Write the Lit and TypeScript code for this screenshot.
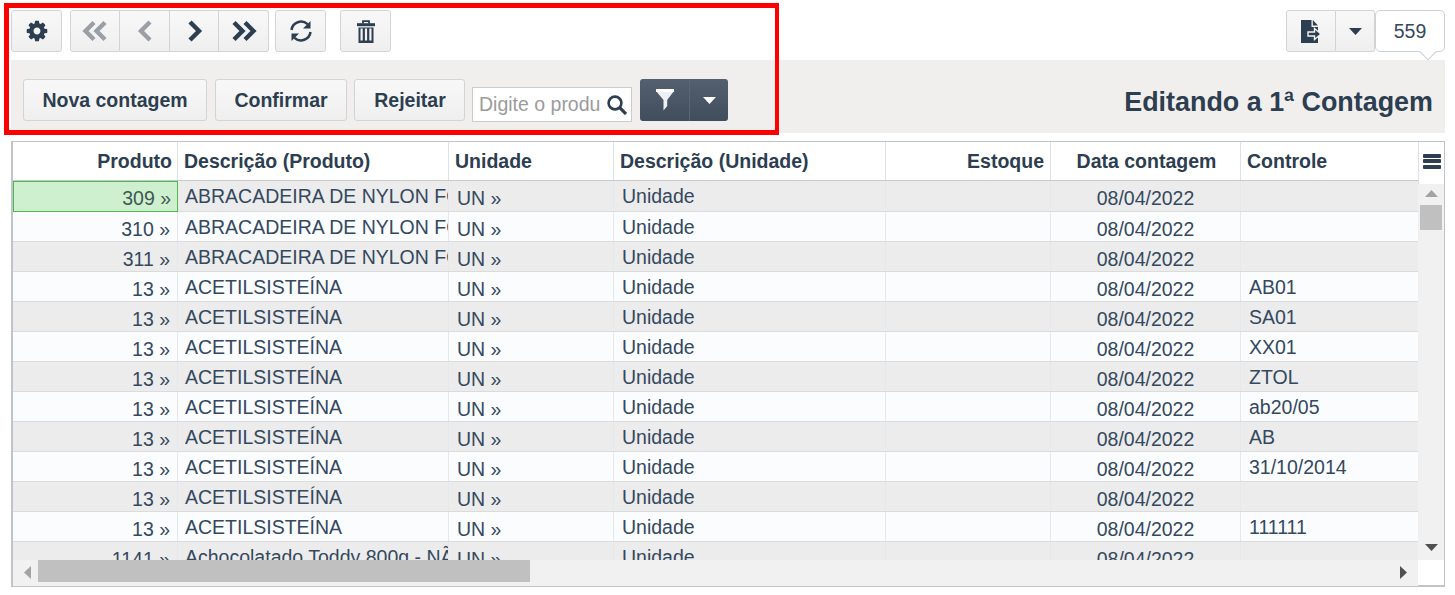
import { LitElement, html, css, svg } from "lit";
import { customElement } from "lit/decorators.js";

const COG = "M1152 896q0-106-75-181t-181-75-181 75-75 181 75 181 181 75 181-75 75-181zm512-109v222q0 12-8 23t-20 13l-185 28q-19 54-39 91 35 50 107 138 10 12 10 25t-9 23q-27 37-99 108t-94 71q-12 0-26-9l-138-108q-44 23-91 38-16 136-29 186-7 28-36 28h-222q-14 0-24.5-8.5t-11.5-21.5l-28-184q-49-16-90-37l-141 107q-10 9-25 9-14 0-25-11-126-114-165-168-7-10-7-23 0-12 8-23 15-21 51-66.5t54-70.5q-27-50-41-99l-183-27q-13-2-21-12.5t-8-23.5v-222q0-12 8-23t19-13l186-28q14-46 39-92-40-57-107-138-10-12-10-24 0-10 9-23 26-36 98.5-107.5t94.5-71.5q13 0 26 10l138 107q44-23 91-38 16-136 29-186 7-28 36-28h222q14 0 24.5 8.5t11.5 21.5l28 184q49 16 90 37l142-107q9-9 24-9 13 0 25 10 129 119 165 170 7 8 7 22 0 12-8 23-15 21-51 66.5t-54 70.5q26 50 41 98l183 28q13 2 21 12.5t8 23.5z";

const fa = (d: string, size: number) => html`<svg class="ic" width=${size} height=${size} viewBox="0 0 1792 1792" fill="currentColor"><path d=${d}></path></svg>`;
const chevrons = (pts: string[]) => html`<svg class="ic" width="26" height="22" viewBox="0 0 26 22" fill="none" stroke="currentColor" stroke-width="4.4">
  ${pts.map((p) => svg`<polyline points=${p}></polyline>`)}</svg>`;
const caret = (fill = "currentColor") => html`<svg class="ic" width="13" height="7" viewBox="0 0 13 7"><polygon points="0,0 13,0 6.5,7" fill=${fill}></polygon></svg>`;

type Row = [string, string, string];
const ABR = "ABRACADEIRA DE NYLON FORTE";
const ACE = "ACETILSISTEÍNA";
const rows: Row[] = [
  ["309 »", ABR, ""], ["310 »", ABR, ""], ["311 »", ABR, ""],
  ["13 »", ACE, "AB01"], ["13 »", ACE, "SA01"], ["13 »", ACE, "XX01"],
  ["13 »", ACE, "ZTOL"], ["13 »", ACE, "ab20/05"], ["13 »", ACE, "AB"],
  ["13 »", ACE, "31/10/2014"], ["13 »", ACE, ""], ["13 »", ACE, "111111"],
  ["1141 »", "Achocolatado Toddy 800g - NÃO USAR", ""],
];

@customElement("app-root")
export class AppRoot extends LitElement {
  static styles = css`
    :host { display: block; position: relative; width: 1455px; height: 595px; overflow: hidden; background: #fff;
      font-family: "Liberation Sans", Arial, sans-serif; color: #2c3e50; }
    .page { padding: 10px 10px 0 11px; display: flex; flex-direction: column; }
    .ic { display: block; flex: none; }
    .top { display: flex; height: 42px; }
    .btn { height: 42px; box-sizing: border-box; border: 1px solid #d4d4d4; border-radius: 3px;
      background: linear-gradient(#f8f8f8, #efefef); display: flex; align-items: center; justify-content: center;
      color: #2c3e50; font: bold 19.5px "Liberation Sans", Arial, sans-serif; flex: none; }
    .w51 { width: 51px; }
    .group { display: flex; flex: none; }
    .group .btn { border-radius: 0; border-left-width: 0; }
    .group .btn:first-child { border-radius: 3px 0 0 3px; border-left-width: 1px; }
    .group .btn:last-child { border-radius: 0 3px 3px 0; }
    .off { color: #9a9fa6; }
    .ml8 { margin-left: 8px; } .ml6 { margin-left: 6px; } .ml14 { margin-left: 14px; }
    .spacer { flex: 1; }
    .count { width: 70px; height: 42px; box-sizing: border-box; position: relative; flex: none; background: #fff;
      border: 1px solid #cfd1d3; border-radius: 5px; display: flex; align-items: center; justify-content: center;
      font-size: 19.5px; color: #34495e; }
    .count::after { content: ""; position: absolute; left: 46px; bottom: -7px; width: 11px; height: 11px; background: #fff;
      border-right: 1px solid #cfd1d3; border-bottom: 1px solid #cfd1d3; transform: rotate(45deg); }
    .panel { margin-top: 8px; height: 73px; background: #f0efee; display: flex; box-sizing: border-box; padding: 19px 12px 0 12px; }
    .panel .btn { margin-right: 8px; }
    .nova { width: 184px; } .conf { width: 132px; } .rej { width: 111px; padding-left: 1px; }
    .panel .conf { margin-right: 7px; } .panel .rej { margin-right: 7px; }
    .search { width: 160px; height: 35px; margin-top: 8px; box-sizing: border-box; border: 1px solid #ccc; background: #fff;
      display: flex; align-items: center; padding-left: 6px; margin-right: 8px; flex: none; }
    .search .ph { width: 121px; overflow: hidden; white-space: nowrap; font-size: 19.5px; color: #9b9b9b; }
    .search .ic { margin-left: 7px; }
    .dark { display: flex; height: 42px; flex: none; width: 88px; border-radius: 3px; background: linear-gradient(#54606f, #414d5d); color: #fff; }
    .dark div { display: flex; align-items: center; justify-content: center; }
    .dark .a { width: 49px; border-right: 1px solid #5a6675; }
    .dark .b { flex: 1; }
    .title { flex: 1; text-align: right; font-size: 26.9px; font-weight: bold; line-height: 46px; color: #2c3e50; white-space: nowrap; }
    .table { margin-top: 8px; height: 446px; box-sizing: border-box; border: 1px solid #c0c3c7; border-left-width: 2px; border-bottom-width: 2px; position: relative;
      display: grid; grid-template-columns: 1405px 26px; grid-template-rows: 38px 1fr 26px; background: #fff; }
    .cols { display: grid; grid-template-columns: 165px 271px 165px 272px 165px 190px 177px; }
    .head { border-bottom: 1px solid #c8cacc; box-sizing: border-box; height: 39px; }
    .hc { font-size: 19.5px; font-weight: bold; color: #2c3e50; padding: 0 6px; line-height: 39px; height: 38px; border-right: 1px solid #dfe1e4; white-space: nowrap; overflow: hidden; }
    .r { text-align: right; } .c { text-align: center; }
    .hc.p1 { padding-right: 5px; }
    .hc.c { padding-left: 8px; }
    .hc.last { border-right: none; }
    .menu { height: 42px; display: flex; align-items: center; justify-content: center; padding-bottom: 4px; box-sizing: border-box; border-left: 1px solid #dfe1e4; }
    .bars { width: 18px; height: 15px; display: flex; flex-direction: column; justify-content: space-between; }
    .bars i { display: block; height: 4px; background: #2c3e50; border-radius: 1px; }
    .body { grid-column: 1; grid-row: 2; overflow: hidden; height: 379px; margin-top: 1px; }
    .row { height: 30px; box-sizing: border-box; border-bottom: 1px solid #d9dbdd; }
    .row.odd { background: #ececec; }
    .row.even { background: #fbfcfe; }
    .td { font-size: 19.5px; color: #34495e; white-space: nowrap; overflow: hidden; height: 29px; border-right: 1px solid #e6e8eb; padding: 0 8px; box-sizing: border-box; line-height: 35px; }
    .td.up { line-height: 31px; }
    .td.d { padding-left: 7px; }
    .row.first { height: 31px; }
    .row.first .td { height: 30px; }
    .td.last { border-right: none; }
    .row.first .td.sel { background: #cff0cf; outline: 1px solid #4db84d; outline-offset: -1px; border-right: none; height: 31px; color: #3d5a55; }
    .td.num { padding-right: 7px; text-align: right; }
    .td.c { text-align: center; }
    .vs { grid-column: 2; grid-row: 2 / 3; background: #f1f1f1; margin-top: 4px; position: relative; display: flex; flex-direction: column; align-items: center; height: 376px; }
    .vthumb { width: 22px; height: 25px; background: #c0c0c0; margin-top: 8px; }
    .tri { flex: none; }
    .tri.up { margin-top: 6px; }
    .tri.dn { margin-top: auto; margin-bottom: 9px; }
    .hs { grid-column: 1; grid-row: 3; background: #f1f1f1; display: flex; align-items: center; height: 26px; }
    .hthumb { width: 492px; height: 22px; background: #c0c0c0; margin-left: 7px; margin-top: -4px; }
    .outline { position: absolute; left: 4px; top: 3px; width: 775px; height: 132px; box-sizing: border-box; border: 5px solid #ff0000; border-right-width: 4px; pointer-events: none; }
    .hs .tri { margin-left: 11px; margin-top: -1px; }
    .hs .tri.rt { margin-left: auto; margin-right: 11px; }
  `;

  render() {
    return html`
      <div class="page">
        <div class="top">
          <div class="btn w51">${fa(COG, 24)}</div>
          <div class="group ml8">
            <div class="btn off" style="width:50px">${chevrons(["12,2.5 3.5,11 12,19.5", "23,2.5 14.5,11 23,19.5"])}</div>
            <div class="btn off" style="width:50px">${chevrons(["18,2 9,11 18,20"])}</div>
            <div class="btn" style="width:49px">${chevrons(["9,2 18,11 9,20"])}</div>
            <div class="btn" style="width:50px">${chevrons(["3,2.5 11.5,11 3,19.5", "14,2.5 22.5,11 14,19.5"])}</div>
          </div>
          <div class="btn w51 ml6">
            <svg class="ic" width="24" height="24" viewBox="0 0 24 24">
              <path fill="none" stroke="currentColor" stroke-width="2.5" d="M2.5 11 A9.6 9.6 0 0 1 18.5 5.2"></path>
              <polygon fill="currentColor" points="21.5,2 21.5,9.5 14,9.5"></polygon>
              <path fill="none" stroke="currentColor" stroke-width="2.5" d="M21.5 13 A9.6 9.6 0 0 1 5.5 18.8"></path>
              <polygon fill="currentColor" points="2.5,22 2.5,14.5 10,14.5"></polygon>
            </svg>
          </div>
          <div class="btn w51 ml14">
            <svg class="ic" width="18" height="23" viewBox="0 0 18 23">
              <path fill="none" stroke="currentColor" stroke-width="1.8" d="M6 3.5V1.2h6v2.3"></path>
              <rect x="0" y="3.2" width="18" height="3" fill="currentColor"></rect>
              <path fill="currentColor" d="M1.5 7.5h15V23h-15z"></path>
              <path fill="#f4f4f4" d="M3.5 8.5h2.2v12H3.5zM7.9 8.5h2.2v12H7.9zM12.3 8.5h2.2v12h-2.2z"></path>
            </svg>
          </div>
          <div class="spacer"></div>
          <div class="group">
            <div class="btn" style="width:50px">
              <svg class="ic" width="21" height="23" viewBox="0 0 21 23">
                <path fill="currentColor" d="M0 0h10.5v7H17v16H0z"></path>
                <path fill="currentColor" d="M11.8 0L17 5.6h-5.2z"></path>
                <path fill="currentColor" stroke="#f4f4f4" stroke-width="1.4" d="M7 12h6.5V8.5l6.5 5.5-6.5 5.5V16H7z"></path>
              </svg>
            </div>
            <div class="btn" style="width:39px">${caret()}</div>
          </div>
          <div class="count">559</div>
        </div>
        <div class="panel">
          <div class="btn nova">Nova contagem</div>
          <div class="btn conf">Confirmar</div>
          <div class="btn rej">Rejeitar</div>
          <div class="search"><div class="ph">Digite o produto</div>
            <svg class="ic" width="20" height="20" viewBox="0 0 20 20" fill="none" stroke="currentColor">
              <circle cx="8" cy="8" r="6.4" stroke-width="2.6"></circle>
              <path stroke-width="3.2" d="M12.7 12.7L19 19"></path>
            </svg>
          </div>
          <div class="dark">
            <div class="a">
              <svg class="ic" width="18" height="22" viewBox="0 0 18 22">
                <polygon points="0,2 18,2 11.2,11 11.2,17 7.5,21.5 7.5,11" fill="#eef0f3"></polygon>
                <rect x="0" y="0" width="18" height="3" fill="#fff"></rect>
              </svg>
            </div>
            <div class="b">${caret("#fff")}</div>
          </div>
          <div class="title">Editando a 1ª Contagem</div>
        </div>
        <div class="table">
          <div class="cols head">
            <div class="hc r p1">Produto</div>
            <div class="hc">Descrição (Produto)</div>
            <div class="hc">Unidade</div>
            <div class="hc">Descrição (Unidade)</div>
            <div class="hc r">Estoque</div>
            <div class="hc c">Data contagem</div>
            <div class="hc last">Controle</div>
          </div>
          <div class="menu"><div class="bars"><i></i><i></i><i></i></div></div>
          <div class="body">
            ${rows.map((r, i) => html`
              <div class="cols row ${i % 2 ? "even" : "odd"} ${i === 0 ? "first" : ""}">
                <div class="td num ${i === 0 ? "sel" : ""}">${r[0]}</div>
                <div class="td up d">${r[1]}</div>
                <div class="td">UN »</div>
                <div class="td up">Unidade</div>
                <div class="td"></div>
                <div class="td c">08/04/2022</div>
                <div class="td up last">${r[2]}</div>
              </div>`)}
          </div>
          <div class="vs">
            <svg class="ic tri up" width="13" height="7" viewBox="0 0 13 7"><polygon points="0,7 13,7 6.5,0" fill="#a3a3a3"></polygon></svg>
            <div class="vthumb"></div>
            <svg class="ic tri dn" width="13" height="7" viewBox="0 0 13 7"><polygon points="0,0 13,0 6.5,7" fill="#505050"></polygon></svg>
          </div>
          <div class="hs">
            <svg class="ic tri" width="7" height="13" viewBox="0 0 7 13"><polygon points="7,0 7,13 0,6.5" fill="#a3a3a3"></polygon></svg>
            <div class="hthumb"></div>
            <svg class="ic tri rt" width="7" height="13" viewBox="0 0 7 13"><polygon points="0,0 0,13 7,6.5" fill="#505050"></polygon></svg>
          </div>
        </div>
      </div>
      <div class="outline"></div>
    `;
  }
}
